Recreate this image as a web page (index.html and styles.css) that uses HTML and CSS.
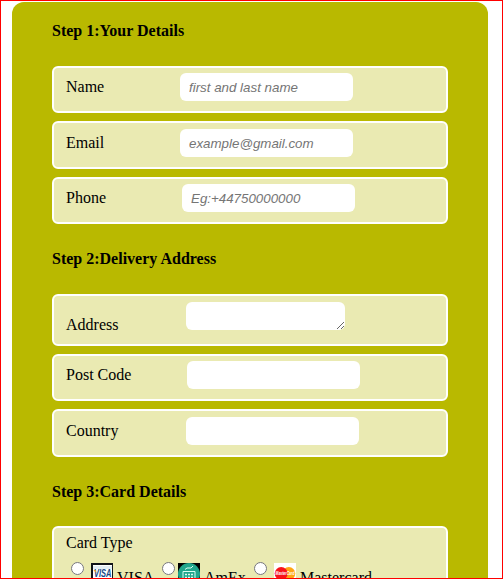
FILE: index.html
```html
<!DOCTYPE html>
<html lang="en">
<head>
<meta charset="utf-8">
<title>Payment form</title>
<link rel="stylesheet" href="styles.css">
</head>
<body>
<form class="form">
  <h2 class="step">Step 1:Your Details</h2>
  <div class="fields">
    <div class="row"><label class="label" for="name">Name</label><input class="input" id="name" type="text" placeholder="first and last name"></div>
    <div class="row tall"><label class="label" for="email">Email</label><input class="input" id="email" type="email" placeholder="example@gmail.com"></div>
    <div class="row phone"><label class="label" for="phone">Phone</label><input class="input" id="phone" type="tel" placeholder="Eg:+44750000000"></div>
  </div>
  <h2 class="step">Step 2:Delivery Address</h2>
  <div class="fields">
    <div class="row address"><label class="label" for="address">Address</label><textarea class="input" id="address"></textarea></div>
    <div class="row postcode"><label class="label" for="postcode">Post Code</label><input class="input" id="postcode" type="text"></div>
    <div class="row tall country"><label class="label" for="country">Country</label><input class="input" id="country" type="text"></div>
  </div>
  <h2 class="step step-card">Step 3:Card Details</h2>
  <div class="fields">
    <div class="cards">
      <div class="cards-title">Card Type</div>
      <div class="options">
        <label class="option visa"><input class="radio" type="radio" name="card">
          <svg class="logo" viewBox="0 0 22 22"><path fill="#101318" d="M0 0h22v22H0z"/><path fill="#fff" d="M2 2h19v18H2z"/><path fill="#e3eef6" d="M2 3h19v3H2z"/><text class="visa-mark" x="3" y="13.8" textLength="17.5" lengthAdjust="spacingAndGlyphs">VISA</text><path fill="#f5a21d" d="M2.3 7h2.200l1 3z"/></svg>
          <span>VISA</span></label>
        <label class="option amex"><input class="radio" type="radio" name="card">
          <svg class="logo" viewBox="0 0 22 22"><path fill="#000" d="M0 0h22v22H0z"/><circle cx="11" cy="11" r="11" fill="#20a68c"/><g fill="none" stroke="#d9fff3"><path d="M5 19V8.500h12V19z"/><path d="M7 6.500l2-1.500h4l2-2"/><path stroke-width="1.500" stroke-dasharray="2 1" d="M7 11.500h9M7 14.500h9"/></g></svg>
          <span>AmEx</span></label>
        <label class="option master"><input class="radio" type="radio" name="card">
          <svg class="logo" viewBox="0 0 22 22"><path fill="#fff" d="M0 0h22v22H0z"/><circle cx="14.800" cy="10.500" r="6.500" fill="#ffa514"/><circle cx="7.200" cy="10.500" r="6.500" fill="#f7131b"/><text class="master-mark" x="1.500" y="12" textLength="19" lengthAdjust="spacingAndGlyphs">MasterCard</text></svg>
          <span>Mastercard</span></label>
      </div>
    </div>
  </div>
</form>
</body>
</html>
```

FILE: styles.css
```css
* {
  box-sizing: border-box;
}

html {
  overflow: hidden;
}

body {
  height: 579px;
  margin: 0;
  padding: 1px 14px 0 11px;
  overflow: hidden;
  border: 1px solid #f00;
  background: #fff;
  color: #000;
  font: 16px/18px "Liberation Serif", serif;
}

.form {
  width: 476px;
  height: 620px;
  padding: 20px 40px;
  border-radius: 12px;
  background: #b9b900;
}

.step {
  height: 18px;
  margin: 0 0 26px;
  font-size: 16px;
}

.step-card {
  margin-bottom: 25px;
}

.fields {
  display: flex;
  flex-direction: column;
  gap: 8px;
  margin-bottom: 26px;
}

.row,
.cards {
  border: 2px solid #fff;
  border-radius: 6px;
  background: #eaeab2;
}

.row {
  display: flex;
  align-items: flex-start;
  height: 47px;
  padding: 5px 0 0 12px;
}

.tall {
  height: 48px;
  padding-top: 6px;
}

.address {
  height: 52px;
  padding-top: 6px;
}

.label {
  width: 114px;
  margin-top: 5px;
}

.phone .label {
  width: 116px;
}

.address .label {
  width: 120px;
  margin-top: 14px;
}

.postcode .label {
  width: 121px;
}

.country .label {
  width: 120px;
}

.input {
  width: 173px;
  height: 28px;
  margin: 0;
  padding: 0 9px;
  border: 0;
  border-radius: 6px;
  background: #fff;
  font: italic 13.333px "Liberation Sans", sans-serif;
}

.address .input {
  width: 159px;
}

.input::placeholder {
  color: #757575;
}

.cards {
  height: 100px;
  padding: 6px 0 0 12px;
}

.options {
  display: flex;
  align-items: flex-start;
  margin-top: 10px;
  padding-left: 5px;
}

.option {
  display: flex;
  align-items: flex-start;
}

.visa {
  width: 91px;
}

.amex {
  width: 92px;
}

.radio {
  width: 13px;
  height: 13px;
  margin: 0 7px 0 0;
}

.amex .radio {
  margin-right: 3px;
}

.logo {
  width: 22px;
  height: 22px;
  margin: 1px 4px 0 0;
}

.option span {
  margin-top: 7px;
}

.visa-mark {
  fill: #164a86;
  font: italic bold 10px "Liberation Sans", sans-serif;
}

.master-mark {
  fill: #fff;
  font: italic bold 4.5px "Liberation Sans", sans-serif;
}
```
